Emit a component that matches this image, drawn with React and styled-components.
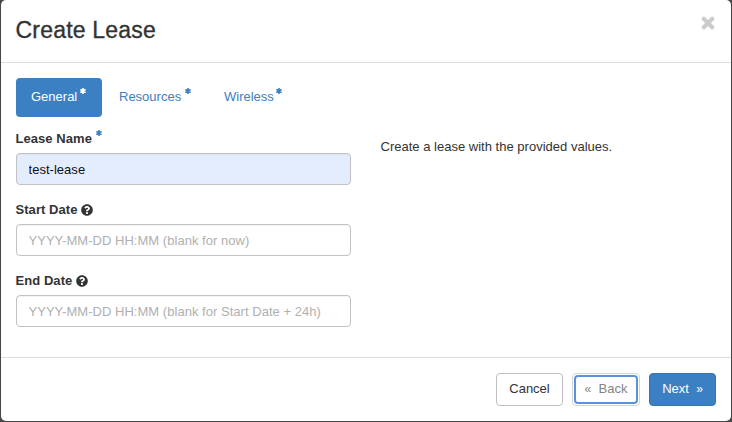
import React from "react";
import styled, { createGlobalStyle } from "styled-components";
import { FaQuestionCircle } from "react-icons/fa";

const GlobalStyle = createGlobalStyle`
  *, *::before, *::after { box-sizing: border-box; }
  html, body { margin: 0; background: #474747; }
  body {
    font-family: "Liberation Sans", Arial, sans-serif;
    font-size: 13px;
    line-height: 18px;
    color: #333;
    overflow: hidden;
  }
  button, input { font: inherit; letter-spacing: inherit; }
`;

const Modal = styled.div`
  width: 730px;
  height: 421px;
  margin: 0 1px 1px;
  display: flex;
  flex-direction: column;
  background: #fff;
  border-radius: 5px;
`;

const Header = styled.header`
  height: 63px;
  flex: none;
  display: flex;
  justify-content: space-between;
  align-items: flex-start;
  padding: 16px 16px 0 14.5px;
  border-bottom: 1px solid #dedede;
`;

const Title = styled.h3`
  margin: 0;
  font-size: 23px;
  font-weight: 400;
  line-height: 28px;
  letter-spacing: 0.2px;
  -webkit-text-stroke: 0.35px currentColor;
`;

const CloseButton = styled.button`
  display: flex;
  padding: 0;
  border: 0;
  background: none;
  color: #ccc;
  svg { display: block; }
`;

const Body = styled.main`
  flex: 1;
  padding: 15px 15px 0;
`;

const Tabs = styled.nav`
  display: flex;
  gap: 2px;
  height: 39px;
`;

const Tab = styled.button`
  width: ${(p) => p.$width}px;
  display: flex;
  align-items: flex-start;
  padding: 10px 0 0 15px;
  border: 0;
  border-radius: 4px;
  text-align: left;
  background: ${(p) => (p.$active ? "#3b80c3" : "transparent")};
  color: ${(p) => (p.$active ? "#fff" : "#3b80c3")};
`;

const RequiredIcon = styled.svg`
  width: 6px;
  height: 6px;
  margin-left: ${(p) => p.$gap}px;
  flex: none;
  color: ${(p) => (p.$blue ? "#3b80c3" : "inherit")};
`;

const Columns = styled.div`
  display: grid;
  grid-template-columns: 335px 1fr;
  column-gap: 29.5px;
`;

const Field = styled.div`
  height: 71px;
  padding-top: 13px;
`;

const Label = styled.label`
  height: 23px;
  display: flex;
  margin-left: -0.5px;
  font-weight: 700;
  letter-spacing: 0.06px;
`;

const Help = styled(FaQuestionCircle)`
  width: 12px;
  height: 12px;
  margin: 3px 0 0 3.5px;
`;

const Input = styled.input`
  display: block;
  width: 100%;
  height: 32px;
  padding: 1px 12px 0 11.5px;
  border: 1px solid #c2c2c2;
  border-radius: 4px;
  outline: 0;
  color: #111;
  background: ${(p) => (p.$filled ? "#e4edfe" : "#fff")};
  box-shadow: inset 0 1px 1px rgba(0, 0, 0, 0.05);
  letter-spacing: 0.03px;
  &::placeholder { color: #b0b0b0; opacity: 1; }
`;

const Description = styled.p`
  margin: 21px 0 0;
  letter-spacing: 0.01px;
`;

const Footer = styled.footer`
  height: 64px;
  flex: none;
  display: flex;
  justify-content: flex-end;
  gap: 9px;
  padding: 15px 15px 0;
  border-top: 1px solid #dedede;
`;

const Button = styled.button`
  width: ${(p) => p.$width}px;
  height: 33px;
  display: flex;
  align-items: center;
  justify-content: center;
  padding: 0 0 2px;
  border: 1px solid #bfbfbf;
  border-radius: 4px;
  background: #fff;
  color: #333;
  white-space: pre;
`;

const PrimaryButton = styled(Button)`
  border-color: #3475b3;
  background: #3b80c3;
  color: #fff;
`;

const BackButton = styled(Button)`
  padding: 1px;
  border-color: #d5d5d5;
  color: #848484;
`;

const FocusRing = styled.span`
  width: 64px;
  height: 29px;
  flex: none;
  display: flex;
  align-items: center;
  justify-content: center;
  padding-bottom: 2px;
  border: 2px solid #5a92dc;
  border-radius: 4px;
`;

const Chevron = styled.span`
  font-size: 12px;
`;

function Required({ gap = 4, blue = false }) {
  return (
    <RequiredIcon viewBox="0 0 12 12" $gap={gap} $blue={blue} aria-hidden="true">
      <path
        d="M6 1.2V10.8M1.8 3.6 10.2 8.4M10.2 3.6 1.8 8.4"
        fill="none"
        stroke="currentColor"
        strokeWidth="3.4"
        strokeLinecap="round"
      />
    </RequiredIcon>
  );
}

export default function App() {
  return (
    <>
      <GlobalStyle />
      <Modal role="dialog" aria-label="Create Lease">
        <Header>
          <Title>Create Lease</Title>
          <CloseButton aria-label="Close">
            <svg width="14" height="14" viewBox="0 0 14 14">
              <path d="M2.8 2.8 11.2 11.2M11.2 2.8 2.8 11.2" fill="none" stroke="currentColor" strokeWidth="4.2" strokeLinecap="round" />
            </svg>
          </CloseButton>
        </Header>
        <Body>
          <Tabs>
            <Tab $active $width={86}>General<Required gap={3} /></Tab>
            <Tab $width={103}>Resources<Required gap={3.5} /></Tab>
            <Tab $width={88}>Wireless<Required gap={2.5} /></Tab>
          </Tabs>
          <Columns>
            <div>
              <Field>
                <Label htmlFor="name">Lease Name<Required blue gap={4.5} /></Label>
                <Input id="name" $filled defaultValue="test-lease" />
              </Field>
              <Field>
                <Label htmlFor="start">Start Date<Help /></Label>
                <Input id="start" placeholder="YYYY-MM-DD HH:MM (blank for now)" />
              </Field>
              <Field>
                <Label htmlFor="end">End Date<Help /></Label>
                <Input id="end" placeholder="YYYY-MM-DD HH:MM (blank for Start Date + 24h)" />
              </Field>
            </div>
            <Description>Create a lease with the provided values.</Description>
          </Columns>
        </Body>
        <Footer>
          <Button $width={67}>Cancel</Button>
          <BackButton $width={68}><FocusRing><Chevron>«</Chevron>{"  Back"}</FocusRing></BackButton>
          <PrimaryButton $width={67}>{"Next  "}<Chevron>»</Chevron></PrimaryButton>
        </Footer>
      </Modal>
    </>
  );
}
